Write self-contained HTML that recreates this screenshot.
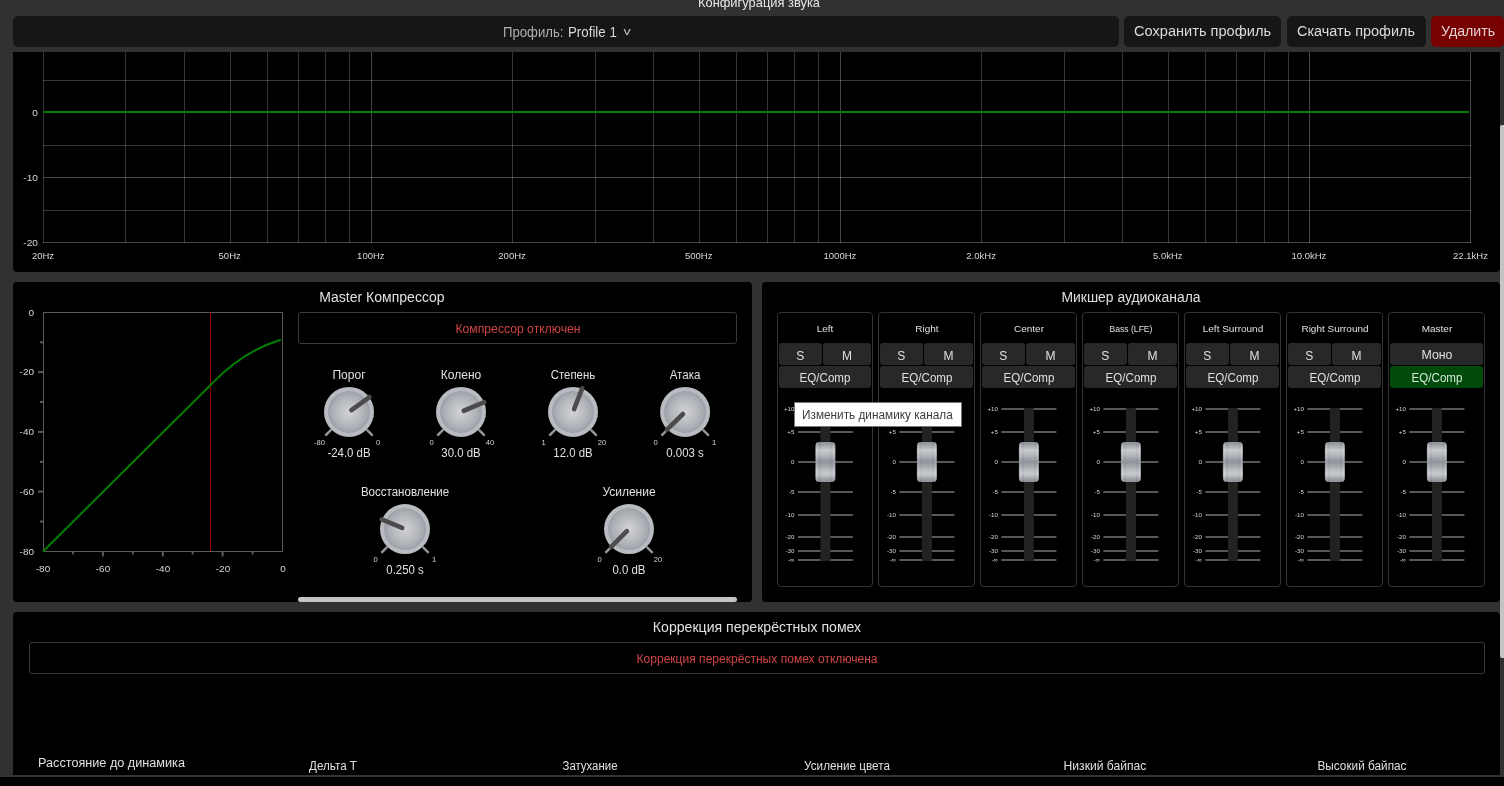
<!DOCTYPE html>
<html lang="ru"><head><meta charset="utf-8"><title>Конфигурация звука</title>
<style>
html,body{margin:0;padding:0;}
body{width:1504px;height:786px;overflow:hidden;position:relative;background:#313131;font-family:"Liberation Sans", sans-serif;}
svg{position:absolute;left:0;top:0;}
</style></head><body>

<div style="position:absolute;left:13px;top:16px;width:1105.75px;height:30.5px;background:#161616;border-radius:5px"></div><div style="position:absolute;left:1124px;top:16px;width:157px;height:31px;background:#161616;border-radius:5px"></div><div style="position:absolute;left:1286.5px;top:16px;width:139.25px;height:31px;background:#161616;border-radius:5px"></div><div style="position:absolute;left:1431px;top:16px;width:73px;height:31px;background:#770000;border-radius:5px"></div><div style="position:absolute;left:13px;top:52px;width:1487px;height:219.75px;background:#000;border-radius:0 0 4px 4px"></div><div style="position:absolute;left:13px;top:282px;width:738.9px;height:320px;background:#000;border-radius:4px"></div><div style="position:absolute;left:298px;top:312px;width:439px;height:32px;box-sizing:border-box;border:1px solid #3a3a3a;border-radius:3px"></div><div style="position:absolute;left:298.4px;top:597px;width:438.5px;height:5px;background:#c4c3c8;border-radius:3px"></div><div style="position:absolute;left:762px;top:282px;width:738px;height:320px;background:#000;border-radius:4px"></div><div style="position:absolute;left:777px;top:312px;width:96px;height:275px;box-sizing:border-box;border:1px solid #333;border-radius:4px"></div><div style="position:absolute;left:779px;top:343px;width:42.5px;height:21.6px;background:#282828;border-radius:3px"></div><div style="position:absolute;left:823px;top:343px;width:48px;height:21.6px;background:#282828;border-radius:3px"></div><div style="position:absolute;left:779px;top:366px;width:92px;height:21.8px;background:#282828;border-radius:3px"></div><div style="position:absolute;left:878px;top:312px;width:97px;height:275px;box-sizing:border-box;border:1px solid #333;border-radius:4px"></div><div style="position:absolute;left:880px;top:343px;width:42.5px;height:21.6px;background:#282828;border-radius:3px"></div><div style="position:absolute;left:924px;top:343px;width:49px;height:21.6px;background:#282828;border-radius:3px"></div><div style="position:absolute;left:880px;top:366px;width:93px;height:21.8px;background:#282828;border-radius:3px"></div><div style="position:absolute;left:980px;top:312px;width:97px;height:275px;box-sizing:border-box;border:1px solid #333;border-radius:4px"></div><div style="position:absolute;left:982px;top:343px;width:42.5px;height:21.6px;background:#282828;border-radius:3px"></div><div style="position:absolute;left:1026px;top:343px;width:49px;height:21.6px;background:#282828;border-radius:3px"></div><div style="position:absolute;left:982px;top:366px;width:93px;height:21.8px;background:#282828;border-radius:3px"></div><div style="position:absolute;left:1082px;top:312px;width:97px;height:275px;box-sizing:border-box;border:1px solid #333;border-radius:4px"></div><div style="position:absolute;left:1084px;top:343px;width:42.5px;height:21.6px;background:#282828;border-radius:3px"></div><div style="position:absolute;left:1128px;top:343px;width:49px;height:21.6px;background:#282828;border-radius:3px"></div><div style="position:absolute;left:1084px;top:366px;width:93px;height:21.8px;background:#282828;border-radius:3px"></div><div style="position:absolute;left:1184px;top:312px;width:97px;height:275px;box-sizing:border-box;border:1px solid #333;border-radius:4px"></div><div style="position:absolute;left:1186px;top:343px;width:42.5px;height:21.6px;background:#282828;border-radius:3px"></div><div style="position:absolute;left:1230px;top:343px;width:49px;height:21.6px;background:#282828;border-radius:3px"></div><div style="position:absolute;left:1186px;top:366px;width:93px;height:21.8px;background:#282828;border-radius:3px"></div><div style="position:absolute;left:1286px;top:312px;width:97px;height:275px;box-sizing:border-box;border:1px solid #333;border-radius:4px"></div><div style="position:absolute;left:1288px;top:343px;width:42.5px;height:21.6px;background:#282828;border-radius:3px"></div><div style="position:absolute;left:1332px;top:343px;width:49px;height:21.6px;background:#282828;border-radius:3px"></div><div style="position:absolute;left:1288px;top:366px;width:93px;height:21.8px;background:#282828;border-radius:3px"></div><div style="position:absolute;left:1388px;top:312px;width:97px;height:275px;box-sizing:border-box;border:1px solid #333;border-radius:4px"></div><div style="position:absolute;left:1390px;top:343px;width:93px;height:21.6px;background:#282828;border-radius:3px"></div><div style="position:absolute;left:1390px;top:366px;width:93px;height:21.8px;background:#004a0a;border-radius:3px"></div><div style="position:absolute;left:13px;top:612px;width:1487px;height:163px;background:#000;border-radius:4px 4px 0 0"></div><div style="position:absolute;left:28.5px;top:642px;width:1456.5px;height:32px;box-sizing:border-box;border:1px solid #3a3a3a;border-radius:3px"></div><div style="position:absolute;left:0px;top:775px;width:1504px;height:2px;background:#333"></div><div style="position:absolute;left:0px;top:777px;width:1504px;height:9px;background:#000"></div><div style="position:absolute;left:1500.2px;top:125px;width:3.8px;height:532.5px;background:#c4c4c8;border-radius:2px 0 0 2px"></div><svg width="1504" height="786" viewBox="0 0 1504 786"><defs>
<radialGradient id="kg" cx="50%" cy="50%" r="50%"><stop offset="0" stop-color="#d3d4d7"/><stop offset="0.75" stop-color="#aeb1b6"/><stop offset="1" stop-color="#9ca0a7"/></radialGradient>
<linearGradient id="hg" x1="0" y1="0" x2="0" y2="1">
<stop offset="0" stop-color="#858a92"/><stop offset="0.08" stop-color="#9a9ea5"/><stop offset="0.2" stop-color="#c4c6c9"/><stop offset="0.32" stop-color="#b2b5ba"/><stop offset="0.5" stop-color="#888d94"/><stop offset="0.68" stop-color="#b2b5ba"/><stop offset="0.8" stop-color="#c4c6c9"/><stop offset="0.92" stop-color="#9a9ea5"/><stop offset="1" stop-color="#858a92"/></linearGradient>
<linearGradient id="hg2" x1="0" y1="0" x2="1" y2="0">
<stop offset="0" stop-color="#000" stop-opacity="0.05"/><stop offset="0.06" stop-color="#fff" stop-opacity="0.28"/><stop offset="0.14" stop-color="#fff" stop-opacity="0"/><stop offset="0.25" stop-color="#000" stop-opacity="0.04"/><stop offset="0.27" stop-color="#fff" stop-opacity="0.06"/><stop offset="0.73" stop-color="#fff" stop-opacity="0.06"/><stop offset="0.75" stop-color="#000" stop-opacity="0.04"/><stop offset="0.86" stop-color="#fff" stop-opacity="0"/><stop offset="0.94" stop-color="#fff" stop-opacity="0.22"/><stop offset="1" stop-color="#000" stop-opacity="0.05"/></linearGradient>
</defs><g stroke="#fff" stroke-width="1"><line x1="43.5" y1="52" x2="43.5" y2="243" stroke-opacity="0.21"/><line x1="125.5" y1="52" x2="125.5" y2="243" stroke-opacity="0.21"/><line x1="184.5" y1="52" x2="184.5" y2="243" stroke-opacity="0.21"/><line x1="230.5" y1="52" x2="230.5" y2="243" stroke-opacity="0.21"/><line x1="267.5" y1="52" x2="267.5" y2="243" stroke-opacity="0.21"/><line x1="298.5" y1="52" x2="298.5" y2="243" stroke-opacity="0.21"/><line x1="325.5" y1="52" x2="325.5" y2="243" stroke-opacity="0.21"/><line x1="349.5" y1="52" x2="349.5" y2="243" stroke-opacity="0.21"/><line x1="371.5" y1="52" x2="371.5" y2="243" stroke-opacity="0.27"/><line x1="512.5" y1="52" x2="512.5" y2="243" stroke-opacity="0.21"/><line x1="595.5" y1="52" x2="595.5" y2="243" stroke-opacity="0.21"/><line x1="653.5" y1="52" x2="653.5" y2="243" stroke-opacity="0.21"/><line x1="699.5" y1="52" x2="699.5" y2="243" stroke-opacity="0.21"/><line x1="736.5" y1="52" x2="736.5" y2="243" stroke-opacity="0.21"/><line x1="767.5" y1="52" x2="767.5" y2="243" stroke-opacity="0.21"/><line x1="794.5" y1="52" x2="794.5" y2="243" stroke-opacity="0.21"/><line x1="818.5" y1="52" x2="818.5" y2="243" stroke-opacity="0.21"/><line x1="840.5" y1="52" x2="840.5" y2="243" stroke-opacity="0.27"/><line x1="981.5" y1="52" x2="981.5" y2="243" stroke-opacity="0.21"/><line x1="1064.5" y1="52" x2="1064.5" y2="243" stroke-opacity="0.21"/><line x1="1122.5" y1="52" x2="1122.5" y2="243" stroke-opacity="0.21"/><line x1="1168.5" y1="52" x2="1168.5" y2="243" stroke-opacity="0.21"/><line x1="1205.5" y1="52" x2="1205.5" y2="243" stroke-opacity="0.21"/><line x1="1236.5" y1="52" x2="1236.5" y2="243" stroke-opacity="0.21"/><line x1="1264.5" y1="52" x2="1264.5" y2="243" stroke-opacity="0.21"/><line x1="1288.5" y1="52" x2="1288.5" y2="243" stroke-opacity="0.21"/><line x1="1309.5" y1="52" x2="1309.5" y2="243" stroke-opacity="0.27"/><line x1="1470.5" y1="52" x2="1470.5" y2="243" stroke-opacity="0.27"/><line x1="43" y1="80.5" x2="1471" y2="80.5" stroke-opacity="0.21"/><line x1="43" y1="145.5" x2="1471" y2="145.5" stroke-opacity="0.21"/><line x1="43" y1="177.5" x2="1471" y2="177.5" stroke-opacity="0.27"/><line x1="43" y1="210.5" x2="1471" y2="210.5" stroke-opacity="0.21"/><line x1="43" y1="242.5" x2="1471" y2="242.5" stroke-opacity="0.27"/></g><line x1="43" y1="112" x2="1469" y2="112" stroke="#008000" stroke-width="2"/><rect x="43.5" y="312.5" width="239" height="239" fill="none" stroke="#5a5a5a" stroke-width="1"/><line x1="40" y1="342.3" x2="43" y2="342.3" stroke="#5a5a5a" stroke-width="2"/><line x1="252.6" y1="551.4" x2="252.6" y2="554.4" stroke="#5a5a5a" stroke-width="2"/><line x1="38" y1="372.1" x2="43" y2="372.1" stroke="#5a5a5a" stroke-width="2"/><line x1="222.6" y1="551.4" x2="222.6" y2="556.4" stroke="#5a5a5a" stroke-width="2"/><line x1="40" y1="402.0" x2="43" y2="402.0" stroke="#5a5a5a" stroke-width="2"/><line x1="192.7" y1="551.4" x2="192.7" y2="554.4" stroke="#5a5a5a" stroke-width="2"/><line x1="38" y1="431.9" x2="43" y2="431.9" stroke="#5a5a5a" stroke-width="2"/><line x1="162.8" y1="551.4" x2="162.8" y2="556.4" stroke="#5a5a5a" stroke-width="2"/><line x1="40" y1="461.8" x2="43" y2="461.8" stroke="#5a5a5a" stroke-width="2"/><line x1="132.8" y1="551.4" x2="132.8" y2="554.4" stroke="#5a5a5a" stroke-width="2"/><line x1="38" y1="491.6" x2="43" y2="491.6" stroke="#5a5a5a" stroke-width="2"/><line x1="102.9" y1="551.4" x2="102.9" y2="556.4" stroke="#5a5a5a" stroke-width="2"/><line x1="40" y1="521.5" x2="43" y2="521.5" stroke="#5a5a5a" stroke-width="2"/><line x1="72.9" y1="551.4" x2="72.9" y2="554.4" stroke="#5a5a5a" stroke-width="2"/><line x1="210.5" y1="312.5" x2="210.5" y2="551" stroke="#8b0000" stroke-width="1.1"/><path d="M43,551.5 L210.6,385 C215.55,380.05 239.6,352.3 280.8,339.8" fill="none" stroke="#008000" stroke-width="2"/><line x1="331.32" y1="429.58" x2="325.31" y2="435.59" stroke="#969696" stroke-width="2.4"/><line x1="366.68" y1="429.58" x2="372.69" y2="435.59" stroke="#969696" stroke-width="2.4"/><circle cx="349" cy="411.9" r="25" fill="#b8bbbf"/><circle cx="349" cy="411.9" r="21" fill="url(#kg)"/><line x1="351.43" y1="410.14" x2="369.47" y2="397.03" stroke="#4c4c4c" stroke-width="4.6" stroke-linecap="round"/><line x1="443.32" y1="429.58" x2="437.31" y2="435.59" stroke="#969696" stroke-width="2.4"/><line x1="478.68" y1="429.58" x2="484.69" y2="435.59" stroke="#969696" stroke-width="2.4"/><circle cx="461" cy="411.9" r="25" fill="#b8bbbf"/><circle cx="461" cy="411.9" r="21" fill="url(#kg)"/><line x1="463.77" y1="410.75" x2="484.37" y2="402.22" stroke="#4c4c4c" stroke-width="4.6" stroke-linecap="round"/><line x1="555.32" y1="429.58" x2="549.31" y2="435.59" stroke="#969696" stroke-width="2.4"/><line x1="590.68" y1="429.58" x2="596.69" y2="435.59" stroke="#969696" stroke-width="2.4"/><circle cx="573" cy="411.9" r="25" fill="#b8bbbf"/><circle cx="573" cy="411.9" r="21" fill="url(#kg)"/><line x1="574.09" y1="409.11" x2="582.20" y2="388.33" stroke="#4c4c4c" stroke-width="4.6" stroke-linecap="round"/><line x1="667.42" y1="429.58" x2="661.41" y2="435.59" stroke="#969696" stroke-width="2.4"/><line x1="702.78" y1="429.58" x2="708.79" y2="435.59" stroke="#969696" stroke-width="2.4"/><circle cx="685.1" cy="411.9" r="25" fill="#b8bbbf"/><circle cx="685.1" cy="411.9" r="21" fill="url(#kg)"/><line x1="682.95" y1="413.99" x2="666.96" y2="429.54" stroke="#4c4c4c" stroke-width="4.6" stroke-linecap="round"/><line x1="387.32" y1="546.78" x2="381.31" y2="552.79" stroke="#969696" stroke-width="2.4"/><line x1="422.68" y1="546.78" x2="428.69" y2="552.79" stroke="#969696" stroke-width="2.4"/><circle cx="405" cy="529.1" r="25" fill="#b8bbbf"/><circle cx="405" cy="529.1" r="21" fill="url(#kg)"/><line x1="402.23" y1="527.95" x2="381.63" y2="519.42" stroke="#4c4c4c" stroke-width="4.6" stroke-linecap="round"/><line x1="611.32" y1="546.78" x2="605.31" y2="552.79" stroke="#969696" stroke-width="2.4"/><line x1="646.68" y1="546.78" x2="652.69" y2="552.79" stroke="#969696" stroke-width="2.4"/><circle cx="629" cy="529.1" r="25" fill="#b8bbbf"/><circle cx="629" cy="529.1" r="21" fill="url(#kg)"/><line x1="626.88" y1="531.22" x2="611.11" y2="546.99" stroke="#4c4c4c" stroke-width="4.6" stroke-linecap="round"/><line x1="797.9" y1="409" x2="852.9" y2="409" stroke="#585858" stroke-width="2"/><line x1="797.9" y1="432" x2="852.9" y2="432" stroke="#585858" stroke-width="2"/><line x1="797.9" y1="462" x2="852.9" y2="462" stroke="#585858" stroke-width="2"/><line x1="797.9" y1="492" x2="852.9" y2="492" stroke="#585858" stroke-width="2"/><line x1="797.9" y1="515" x2="852.9" y2="515" stroke="#585858" stroke-width="2"/><line x1="797.9" y1="537" x2="852.9" y2="537" stroke="#585858" stroke-width="2"/><line x1="797.9" y1="551" x2="852.9" y2="551" stroke="#585858" stroke-width="2"/><line x1="797.9" y1="560" x2="852.9" y2="560" stroke="#585858" stroke-width="2"/><rect x="820.4" y="408" width="10" height="153" rx="1" fill="#222"/><rect x="815.4" y="442" width="20" height="40" rx="4" fill="url(#hg)"/><rect x="815.4" y="442" width="20" height="40" rx="4" fill="url(#hg2)"/><line x1="815.4" y1="462" x2="820.4" y2="462" stroke="#9aa0a8" stroke-opacity="0.35" stroke-width="2"/><line x1="830.4" y1="462" x2="835.4" y2="462" stroke="#9aa0a8" stroke-opacity="0.35" stroke-width="2"/><line x1="899.4" y1="409" x2="954.4" y2="409" stroke="#585858" stroke-width="2"/><line x1="899.4" y1="432" x2="954.4" y2="432" stroke="#585858" stroke-width="2"/><line x1="899.4" y1="462" x2="954.4" y2="462" stroke="#585858" stroke-width="2"/><line x1="899.4" y1="492" x2="954.4" y2="492" stroke="#585858" stroke-width="2"/><line x1="899.4" y1="515" x2="954.4" y2="515" stroke="#585858" stroke-width="2"/><line x1="899.4" y1="537" x2="954.4" y2="537" stroke="#585858" stroke-width="2"/><line x1="899.4" y1="551" x2="954.4" y2="551" stroke="#585858" stroke-width="2"/><line x1="899.4" y1="560" x2="954.4" y2="560" stroke="#585858" stroke-width="2"/><rect x="921.9" y="408" width="10" height="153" rx="1" fill="#222"/><rect x="916.9" y="442" width="20" height="40" rx="4" fill="url(#hg)"/><rect x="916.9" y="442" width="20" height="40" rx="4" fill="url(#hg2)"/><line x1="916.9" y1="462" x2="921.9" y2="462" stroke="#9aa0a8" stroke-opacity="0.35" stroke-width="2"/><line x1="931.9" y1="462" x2="936.9" y2="462" stroke="#9aa0a8" stroke-opacity="0.35" stroke-width="2"/><line x1="1001.4000000000001" y1="409" x2="1056.4" y2="409" stroke="#585858" stroke-width="2"/><line x1="1001.4000000000001" y1="432" x2="1056.4" y2="432" stroke="#585858" stroke-width="2"/><line x1="1001.4000000000001" y1="462" x2="1056.4" y2="462" stroke="#585858" stroke-width="2"/><line x1="1001.4000000000001" y1="492" x2="1056.4" y2="492" stroke="#585858" stroke-width="2"/><line x1="1001.4000000000001" y1="515" x2="1056.4" y2="515" stroke="#585858" stroke-width="2"/><line x1="1001.4000000000001" y1="537" x2="1056.4" y2="537" stroke="#585858" stroke-width="2"/><line x1="1001.4000000000001" y1="551" x2="1056.4" y2="551" stroke="#585858" stroke-width="2"/><line x1="1001.4000000000001" y1="560" x2="1056.4" y2="560" stroke="#585858" stroke-width="2"/><rect x="1023.9000000000001" y="408" width="10" height="153" rx="1" fill="#222"/><rect x="1018.9000000000001" y="442" width="20" height="40" rx="4" fill="url(#hg)"/><rect x="1018.9000000000001" y="442" width="20" height="40" rx="4" fill="url(#hg2)"/><line x1="1018.9000000000001" y1="462" x2="1023.9000000000001" y2="462" stroke="#9aa0a8" stroke-opacity="0.35" stroke-width="2"/><line x1="1033.9" y1="462" x2="1038.9" y2="462" stroke="#9aa0a8" stroke-opacity="0.35" stroke-width="2"/><line x1="1103.4" y1="409" x2="1158.4" y2="409" stroke="#585858" stroke-width="2"/><line x1="1103.4" y1="432" x2="1158.4" y2="432" stroke="#585858" stroke-width="2"/><line x1="1103.4" y1="462" x2="1158.4" y2="462" stroke="#585858" stroke-width="2"/><line x1="1103.4" y1="492" x2="1158.4" y2="492" stroke="#585858" stroke-width="2"/><line x1="1103.4" y1="515" x2="1158.4" y2="515" stroke="#585858" stroke-width="2"/><line x1="1103.4" y1="537" x2="1158.4" y2="537" stroke="#585858" stroke-width="2"/><line x1="1103.4" y1="551" x2="1158.4" y2="551" stroke="#585858" stroke-width="2"/><line x1="1103.4" y1="560" x2="1158.4" y2="560" stroke="#585858" stroke-width="2"/><rect x="1125.9" y="408" width="10" height="153" rx="1" fill="#222"/><rect x="1120.9" y="442" width="20" height="40" rx="4" fill="url(#hg)"/><rect x="1120.9" y="442" width="20" height="40" rx="4" fill="url(#hg2)"/><line x1="1120.9" y1="462" x2="1125.9" y2="462" stroke="#9aa0a8" stroke-opacity="0.35" stroke-width="2"/><line x1="1135.9" y1="462" x2="1140.9" y2="462" stroke="#9aa0a8" stroke-opacity="0.35" stroke-width="2"/><line x1="1205.4" y1="409" x2="1260.4" y2="409" stroke="#585858" stroke-width="2"/><line x1="1205.4" y1="432" x2="1260.4" y2="432" stroke="#585858" stroke-width="2"/><line x1="1205.4" y1="462" x2="1260.4" y2="462" stroke="#585858" stroke-width="2"/><line x1="1205.4" y1="492" x2="1260.4" y2="492" stroke="#585858" stroke-width="2"/><line x1="1205.4" y1="515" x2="1260.4" y2="515" stroke="#585858" stroke-width="2"/><line x1="1205.4" y1="537" x2="1260.4" y2="537" stroke="#585858" stroke-width="2"/><line x1="1205.4" y1="551" x2="1260.4" y2="551" stroke="#585858" stroke-width="2"/><line x1="1205.4" y1="560" x2="1260.4" y2="560" stroke="#585858" stroke-width="2"/><rect x="1227.9" y="408" width="10" height="153" rx="1" fill="#222"/><rect x="1222.9" y="442" width="20" height="40" rx="4" fill="url(#hg)"/><rect x="1222.9" y="442" width="20" height="40" rx="4" fill="url(#hg2)"/><line x1="1222.9" y1="462" x2="1227.9" y2="462" stroke="#9aa0a8" stroke-opacity="0.35" stroke-width="2"/><line x1="1237.9" y1="462" x2="1242.9" y2="462" stroke="#9aa0a8" stroke-opacity="0.35" stroke-width="2"/><line x1="1307.4" y1="409" x2="1362.4" y2="409" stroke="#585858" stroke-width="2"/><line x1="1307.4" y1="432" x2="1362.4" y2="432" stroke="#585858" stroke-width="2"/><line x1="1307.4" y1="462" x2="1362.4" y2="462" stroke="#585858" stroke-width="2"/><line x1="1307.4" y1="492" x2="1362.4" y2="492" stroke="#585858" stroke-width="2"/><line x1="1307.4" y1="515" x2="1362.4" y2="515" stroke="#585858" stroke-width="2"/><line x1="1307.4" y1="537" x2="1362.4" y2="537" stroke="#585858" stroke-width="2"/><line x1="1307.4" y1="551" x2="1362.4" y2="551" stroke="#585858" stroke-width="2"/><line x1="1307.4" y1="560" x2="1362.4" y2="560" stroke="#585858" stroke-width="2"/><rect x="1329.9" y="408" width="10" height="153" rx="1" fill="#222"/><rect x="1324.9" y="442" width="20" height="40" rx="4" fill="url(#hg)"/><rect x="1324.9" y="442" width="20" height="40" rx="4" fill="url(#hg2)"/><line x1="1324.9" y1="462" x2="1329.9" y2="462" stroke="#9aa0a8" stroke-opacity="0.35" stroke-width="2"/><line x1="1339.9" y1="462" x2="1344.9" y2="462" stroke="#9aa0a8" stroke-opacity="0.35" stroke-width="2"/><line x1="1409.4" y1="409" x2="1464.4" y2="409" stroke="#585858" stroke-width="2"/><line x1="1409.4" y1="432" x2="1464.4" y2="432" stroke="#585858" stroke-width="2"/><line x1="1409.4" y1="462" x2="1464.4" y2="462" stroke="#585858" stroke-width="2"/><line x1="1409.4" y1="492" x2="1464.4" y2="492" stroke="#585858" stroke-width="2"/><line x1="1409.4" y1="515" x2="1464.4" y2="515" stroke="#585858" stroke-width="2"/><line x1="1409.4" y1="537" x2="1464.4" y2="537" stroke="#585858" stroke-width="2"/><line x1="1409.4" y1="551" x2="1464.4" y2="551" stroke="#585858" stroke-width="2"/><line x1="1409.4" y1="560" x2="1464.4" y2="560" stroke="#585858" stroke-width="2"/><rect x="1431.9" y="408" width="10" height="153" rx="1" fill="#222"/><rect x="1426.9" y="442" width="20" height="40" rx="4" fill="url(#hg)"/><rect x="1426.9" y="442" width="20" height="40" rx="4" fill="url(#hg2)"/><line x1="1426.9" y1="462" x2="1431.9" y2="462" stroke="#9aa0a8" stroke-opacity="0.35" stroke-width="2"/><line x1="1441.9" y1="462" x2="1446.9" y2="462" stroke="#9aa0a8" stroke-opacity="0.35" stroke-width="2"/></svg><div style="position:absolute;left:0;top:0;width:1504px;height:786px;will-change:transform"><span style="position:absolute;left:759.00px;top:-4.47px;font-size:13.5px;line-height:13.5px;color:#e6e6e6;white-space:nowrap;transform-origin:0 0;transform:scaleX(0.9541) translateX(-50%);">Конфигурация звука</span><span style="position:absolute;left:502.70px;top:25.87px;font-size:13.8px;line-height:13.8px;color:#b0b0b0;white-space:nowrap;transform-origin:0 0;transform:scaleX(0.9526);">Профиль:</span><span style="position:absolute;left:567.80px;top:25.87px;font-size:13.8px;line-height:13.8px;color:#d8d8d8;white-space:nowrap;transform-origin:0 0;transform:scaleX(0.9640);">Profile 1</span><span style="position:absolute;left:626.80px;top:26.02px;font-size:11.5px;line-height:11.5px;color:#c8c8c8;white-space:nowrap;transform-origin:0 0;transform:scaleX(1.2522) translateX(-50%);">v</span><span style="position:absolute;left:1134.40px;top:23.03px;font-size:15.5px;line-height:15.5px;color:#dcdcdc;white-space:nowrap;transform-origin:0 0;transform:scaleX(0.9416);">Сохранить профиль</span><span style="position:absolute;left:1296.60px;top:23.03px;font-size:15.5px;line-height:15.5px;color:#dcdcdc;white-space:nowrap;transform-origin:0 0;transform:scaleX(0.9320);">Скачать профиль</span><span style="position:absolute;left:1441.00px;top:23.03px;font-size:15.5px;line-height:15.5px;color:#e2d0d0;white-space:nowrap;transform-origin:0 0;transform:scaleX(0.9124);">Удалить</span><span style="position:absolute;left:38.00px;top:107.92px;font-size:9.5px;line-height:9.5px;color:#d8d8d8;white-space:nowrap;transform-origin:0 0;transform:scaleX(1.0700) translateX(-100%);">0</span><span style="position:absolute;left:38.00px;top:172.93px;font-size:9.5px;line-height:9.5px;color:#d8d8d8;white-space:nowrap;transform-origin:0 0;transform:scaleX(1.0700) translateX(-100%);">-10</span><span style="position:absolute;left:38.00px;top:237.93px;font-size:9.5px;line-height:9.5px;color:#d8d8d8;white-space:nowrap;transform-origin:0 0;transform:scaleX(1.0700) translateX(-100%);">-20</span><span style="position:absolute;left:43.00px;top:250.93px;font-size:9.5px;line-height:9.5px;color:#d8d8d8;white-space:nowrap;transform-origin:0 0;transform:scaleX(1.0000) translateX(-50%);">20Hz</span><span style="position:absolute;left:229.66px;top:250.93px;font-size:9.5px;line-height:9.5px;color:#d8d8d8;white-space:nowrap;transform-origin:0 0;transform:scaleX(1.0000) translateX(-50%);">50Hz</span><span style="position:absolute;left:370.85px;top:250.93px;font-size:9.5px;line-height:9.5px;color:#d8d8d8;white-space:nowrap;transform-origin:0 0;transform:scaleX(1.0000) translateX(-50%);">100Hz</span><span style="position:absolute;left:512.05px;top:250.93px;font-size:9.5px;line-height:9.5px;color:#d8d8d8;white-space:nowrap;transform-origin:0 0;transform:scaleX(1.0000) translateX(-50%);">200Hz</span><span style="position:absolute;left:698.71px;top:250.93px;font-size:9.5px;line-height:9.5px;color:#d8d8d8;white-space:nowrap;transform-origin:0 0;transform:scaleX(1.0000) translateX(-50%);">500Hz</span><span style="position:absolute;left:839.91px;top:250.93px;font-size:9.5px;line-height:9.5px;color:#d8d8d8;white-space:nowrap;transform-origin:0 0;transform:scaleX(1.0000) translateX(-50%);">1000Hz</span><span style="position:absolute;left:981.11px;top:250.93px;font-size:9.5px;line-height:9.5px;color:#d8d8d8;white-space:nowrap;transform-origin:0 0;transform:scaleX(1.0000) translateX(-50%);">2.0kHz</span><span style="position:absolute;left:1167.76px;top:250.93px;font-size:9.5px;line-height:9.5px;color:#d8d8d8;white-space:nowrap;transform-origin:0 0;transform:scaleX(1.0000) translateX(-50%);">5.0kHz</span><span style="position:absolute;left:1308.96px;top:250.93px;font-size:9.5px;line-height:9.5px;color:#d8d8d8;white-space:nowrap;transform-origin:0 0;transform:scaleX(1.0000) translateX(-50%);">10.0kHz</span><span style="position:absolute;left:1470.50px;top:250.93px;font-size:9.5px;line-height:9.5px;color:#d8d8d8;white-space:nowrap;transform-origin:0 0;transform:scaleX(1.0000) translateX(-50%);">22.1kHz</span><span style="position:absolute;left:34.00px;top:308.69px;font-size:9.3px;line-height:9.3px;color:#d8d8d8;white-space:nowrap;transform-origin:0 0;transform:scaleX(1.0700) translateX(-100%);">0</span><span style="position:absolute;left:282.50px;top:564.60px;font-size:9.3px;line-height:9.3px;color:#d8d8d8;white-space:nowrap;transform-origin:0 0;transform:scaleX(1.0700) translateX(-50%);">0</span><span style="position:absolute;left:34.00px;top:368.44px;font-size:9.3px;line-height:9.3px;color:#d8d8d8;white-space:nowrap;transform-origin:0 0;transform:scaleX(1.0700) translateX(-100%);">-20</span><span style="position:absolute;left:222.62px;top:564.60px;font-size:9.3px;line-height:9.3px;color:#d8d8d8;white-space:nowrap;transform-origin:0 0;transform:scaleX(1.0700) translateX(-50%);">-20</span><span style="position:absolute;left:34.00px;top:428.19px;font-size:9.3px;line-height:9.3px;color:#d8d8d8;white-space:nowrap;transform-origin:0 0;transform:scaleX(1.0700) translateX(-100%);">-40</span><span style="position:absolute;left:162.75px;top:564.60px;font-size:9.3px;line-height:9.3px;color:#d8d8d8;white-space:nowrap;transform-origin:0 0;transform:scaleX(1.0700) translateX(-50%);">-40</span><span style="position:absolute;left:34.00px;top:487.94px;font-size:9.3px;line-height:9.3px;color:#d8d8d8;white-space:nowrap;transform-origin:0 0;transform:scaleX(1.0700) translateX(-100%);">-60</span><span style="position:absolute;left:102.88px;top:564.60px;font-size:9.3px;line-height:9.3px;color:#d8d8d8;white-space:nowrap;transform-origin:0 0;transform:scaleX(1.0700) translateX(-50%);">-60</span><span style="position:absolute;left:34.00px;top:547.70px;font-size:9.3px;line-height:9.3px;color:#d8d8d8;white-space:nowrap;transform-origin:0 0;transform:scaleX(1.0700) translateX(-100%);">-80</span><span style="position:absolute;left:43.00px;top:564.60px;font-size:9.3px;line-height:9.3px;color:#d8d8d8;white-space:nowrap;transform-origin:0 0;transform:scaleX(1.0700) translateX(-50%);">-80</span><span style="position:absolute;left:382.40px;top:290.40px;font-size:14px;line-height:14px;color:#e0e0e0;white-space:nowrap;transform-origin:0 0;transform:scaleX(1.0014) translateX(-50%);">Master Компрессор</span><span style="position:absolute;left:517.50px;top:322.80px;font-size:12px;line-height:12px;color:#d04545;white-space:nowrap;transform-origin:0 0;transform:scaleX(1.0148) translateX(-50%);">Компрессор отключен</span><span style="position:absolute;left:349.00px;top:368.70px;font-size:12px;line-height:12px;color:#e0e0e0;white-space:nowrap;transform-origin:0 0;transform:scaleX(1.0000) translateX(-50%);">Порог</span><span style="position:absolute;left:319.50px;top:439.24px;font-size:7.6px;line-height:7.6px;color:#d8d8d8;white-space:nowrap;transform-origin:0 0;transform:scaleX(1.0000) translateX(-50%);">-80</span><span style="position:absolute;left:378.00px;top:439.24px;font-size:7.6px;line-height:7.6px;color:#d8d8d8;white-space:nowrap;transform-origin:0 0;transform:scaleX(1.0000) translateX(-50%);">0</span><span style="position:absolute;left:349.00px;top:446.70px;font-size:12px;line-height:12px;color:#e0e0e0;white-space:nowrap;transform-origin:0 0;transform:scaleX(0.9500) translateX(-50%);">-24.0 dB</span><span style="position:absolute;left:461.00px;top:368.70px;font-size:12px;line-height:12px;color:#e0e0e0;white-space:nowrap;transform-origin:0 0;transform:scaleX(1.0000) translateX(-50%);">Колено</span><span style="position:absolute;left:431.50px;top:439.24px;font-size:7.6px;line-height:7.6px;color:#d8d8d8;white-space:nowrap;transform-origin:0 0;transform:scaleX(1.0000) translateX(-50%);">0</span><span style="position:absolute;left:490.00px;top:439.24px;font-size:7.6px;line-height:7.6px;color:#d8d8d8;white-space:nowrap;transform-origin:0 0;transform:scaleX(1.0000) translateX(-50%);">40</span><span style="position:absolute;left:461.00px;top:446.70px;font-size:12px;line-height:12px;color:#e0e0e0;white-space:nowrap;transform-origin:0 0;transform:scaleX(0.9500) translateX(-50%);">30.0 dB</span><span style="position:absolute;left:573.00px;top:368.70px;font-size:12px;line-height:12px;color:#e0e0e0;white-space:nowrap;transform-origin:0 0;transform:scaleX(0.9494) translateX(-50%);">Степень</span><span style="position:absolute;left:543.50px;top:439.24px;font-size:7.6px;line-height:7.6px;color:#d8d8d8;white-space:nowrap;transform-origin:0 0;transform:scaleX(1.0000) translateX(-50%);">1</span><span style="position:absolute;left:602.00px;top:439.24px;font-size:7.6px;line-height:7.6px;color:#d8d8d8;white-space:nowrap;transform-origin:0 0;transform:scaleX(1.0000) translateX(-50%);">20</span><span style="position:absolute;left:573.00px;top:446.70px;font-size:12px;line-height:12px;color:#e0e0e0;white-space:nowrap;transform-origin:0 0;transform:scaleX(0.9500) translateX(-50%);">12.0 dB</span><span style="position:absolute;left:685.10px;top:368.70px;font-size:12px;line-height:12px;color:#e0e0e0;white-space:nowrap;transform-origin:0 0;transform:scaleX(0.9603) translateX(-50%);">Атака</span><span style="position:absolute;left:655.60px;top:439.24px;font-size:7.6px;line-height:7.6px;color:#d8d8d8;white-space:nowrap;transform-origin:0 0;transform:scaleX(1.0000) translateX(-50%);">0</span><span style="position:absolute;left:714.10px;top:439.24px;font-size:7.6px;line-height:7.6px;color:#d8d8d8;white-space:nowrap;transform-origin:0 0;transform:scaleX(1.0000) translateX(-50%);">1</span><span style="position:absolute;left:685.10px;top:446.70px;font-size:12px;line-height:12px;color:#e0e0e0;white-space:nowrap;transform-origin:0 0;transform:scaleX(0.9500) translateX(-50%);">0.003 s</span><span style="position:absolute;left:405.00px;top:485.90px;font-size:12px;line-height:12px;color:#e0e0e0;white-space:nowrap;transform-origin:0 0;transform:scaleX(0.9608) translateX(-50%);">Восстановление</span><span style="position:absolute;left:375.50px;top:556.44px;font-size:7.6px;line-height:7.6px;color:#d8d8d8;white-space:nowrap;transform-origin:0 0;transform:scaleX(1.0000) translateX(-50%);">0</span><span style="position:absolute;left:434.00px;top:556.44px;font-size:7.6px;line-height:7.6px;color:#d8d8d8;white-space:nowrap;transform-origin:0 0;transform:scaleX(1.0000) translateX(-50%);">1</span><span style="position:absolute;left:405.00px;top:563.90px;font-size:12px;line-height:12px;color:#e0e0e0;white-space:nowrap;transform-origin:0 0;transform:scaleX(0.9500) translateX(-50%);">0.250 s</span><span style="position:absolute;left:629.00px;top:485.90px;font-size:12px;line-height:12px;color:#e0e0e0;white-space:nowrap;transform-origin:0 0;transform:scaleX(1.0000) translateX(-50%);">Усиление</span><span style="position:absolute;left:599.50px;top:556.44px;font-size:7.6px;line-height:7.6px;color:#d8d8d8;white-space:nowrap;transform-origin:0 0;transform:scaleX(1.0000) translateX(-50%);">0</span><span style="position:absolute;left:658.00px;top:556.44px;font-size:7.6px;line-height:7.6px;color:#d8d8d8;white-space:nowrap;transform-origin:0 0;transform:scaleX(1.0000) translateX(-50%);">20</span><span style="position:absolute;left:629.00px;top:563.90px;font-size:12px;line-height:12px;color:#e0e0e0;white-space:nowrap;transform-origin:0 0;transform:scaleX(0.9500) translateX(-50%);">0.0 dB</span><span style="position:absolute;left:1131.00px;top:290.00px;font-size:14px;line-height:14px;color:#e0e0e0;white-space:nowrap;transform-origin:0 0;transform:scaleX(0.9933) translateX(-50%);">Микшер аудиоканала</span><span style="position:absolute;left:825.00px;top:324.03px;font-size:9.5px;line-height:9.5px;color:#e0e0e0;white-space:nowrap;transform-origin:0 0;transform:scaleX(1.0500) translateX(-50%);">Left</span><span style="position:absolute;left:800.20px;top:349.50px;font-size:12px;line-height:12px;color:#e0e0e0;white-space:nowrap;transform-origin:0 0;transform:scaleX(1.0000) translateX(-50%);">S</span><span style="position:absolute;left:847.00px;top:349.50px;font-size:12px;line-height:12px;color:#e0e0e0;white-space:nowrap;transform-origin:0 0;transform:scaleX(1.0000) translateX(-50%);">M</span><span style="position:absolute;left:825.00px;top:371.88px;font-size:12.5px;line-height:12.5px;color:#e0e0e0;white-space:nowrap;transform-origin:0 0;transform:scaleX(0.9255) translateX(-50%);">EQ/Comp</span><span style="position:absolute;left:794.40px;top:406.03px;font-size:6.2px;line-height:6.2px;color:#d8d8d8;white-space:nowrap;transform-origin:0 0;transform:scaleX(1.0000) translateX(-100%);">+10</span><span style="position:absolute;left:794.40px;top:429.03px;font-size:6.2px;line-height:6.2px;color:#d8d8d8;white-space:nowrap;transform-origin:0 0;transform:scaleX(1.0000) translateX(-100%);">+5</span><span style="position:absolute;left:794.40px;top:459.03px;font-size:6.2px;line-height:6.2px;color:#d8d8d8;white-space:nowrap;transform-origin:0 0;transform:scaleX(1.0000) translateX(-100%);">0</span><span style="position:absolute;left:794.40px;top:489.03px;font-size:6.2px;line-height:6.2px;color:#d8d8d8;white-space:nowrap;transform-origin:0 0;transform:scaleX(1.0000) translateX(-100%);">-5</span><span style="position:absolute;left:794.40px;top:512.03px;font-size:6.2px;line-height:6.2px;color:#d8d8d8;white-space:nowrap;transform-origin:0 0;transform:scaleX(1.0000) translateX(-100%);">-10</span><span style="position:absolute;left:794.40px;top:534.03px;font-size:6.2px;line-height:6.2px;color:#d8d8d8;white-space:nowrap;transform-origin:0 0;transform:scaleX(1.0000) translateX(-100%);">-20</span><span style="position:absolute;left:794.40px;top:548.03px;font-size:6.2px;line-height:6.2px;color:#d8d8d8;white-space:nowrap;transform-origin:0 0;transform:scaleX(1.0000) translateX(-100%);">-30</span><span style="position:absolute;left:794.40px;top:557.03px;font-size:6.2px;line-height:6.2px;color:#d8d8d8;white-space:nowrap;transform-origin:0 0;transform:scaleX(1.0000) translateX(-100%);">-∞</span><span style="position:absolute;left:926.50px;top:324.03px;font-size:9.5px;line-height:9.5px;color:#e0e0e0;white-space:nowrap;transform-origin:0 0;transform:scaleX(1.0500) translateX(-50%);">Right</span><span style="position:absolute;left:901.20px;top:349.50px;font-size:12px;line-height:12px;color:#e0e0e0;white-space:nowrap;transform-origin:0 0;transform:scaleX(1.0000) translateX(-50%);">S</span><span style="position:absolute;left:948.50px;top:349.50px;font-size:12px;line-height:12px;color:#e0e0e0;white-space:nowrap;transform-origin:0 0;transform:scaleX(1.0000) translateX(-50%);">M</span><span style="position:absolute;left:926.50px;top:371.88px;font-size:12.5px;line-height:12.5px;color:#e0e0e0;white-space:nowrap;transform-origin:0 0;transform:scaleX(0.9255) translateX(-50%);">EQ/Comp</span><span style="position:absolute;left:895.90px;top:406.03px;font-size:6.2px;line-height:6.2px;color:#d8d8d8;white-space:nowrap;transform-origin:0 0;transform:scaleX(1.0000) translateX(-100%);">+10</span><span style="position:absolute;left:895.90px;top:429.03px;font-size:6.2px;line-height:6.2px;color:#d8d8d8;white-space:nowrap;transform-origin:0 0;transform:scaleX(1.0000) translateX(-100%);">+5</span><span style="position:absolute;left:895.90px;top:459.03px;font-size:6.2px;line-height:6.2px;color:#d8d8d8;white-space:nowrap;transform-origin:0 0;transform:scaleX(1.0000) translateX(-100%);">0</span><span style="position:absolute;left:895.90px;top:489.03px;font-size:6.2px;line-height:6.2px;color:#d8d8d8;white-space:nowrap;transform-origin:0 0;transform:scaleX(1.0000) translateX(-100%);">-5</span><span style="position:absolute;left:895.90px;top:512.03px;font-size:6.2px;line-height:6.2px;color:#d8d8d8;white-space:nowrap;transform-origin:0 0;transform:scaleX(1.0000) translateX(-100%);">-10</span><span style="position:absolute;left:895.90px;top:534.03px;font-size:6.2px;line-height:6.2px;color:#d8d8d8;white-space:nowrap;transform-origin:0 0;transform:scaleX(1.0000) translateX(-100%);">-20</span><span style="position:absolute;left:895.90px;top:548.03px;font-size:6.2px;line-height:6.2px;color:#d8d8d8;white-space:nowrap;transform-origin:0 0;transform:scaleX(1.0000) translateX(-100%);">-30</span><span style="position:absolute;left:895.90px;top:557.03px;font-size:6.2px;line-height:6.2px;color:#d8d8d8;white-space:nowrap;transform-origin:0 0;transform:scaleX(1.0000) translateX(-100%);">-∞</span><span style="position:absolute;left:1028.50px;top:324.03px;font-size:9.5px;line-height:9.5px;color:#e0e0e0;white-space:nowrap;transform-origin:0 0;transform:scaleX(1.0500) translateX(-50%);">Center</span><span style="position:absolute;left:1003.20px;top:349.50px;font-size:12px;line-height:12px;color:#e0e0e0;white-space:nowrap;transform-origin:0 0;transform:scaleX(1.0000) translateX(-50%);">S</span><span style="position:absolute;left:1050.50px;top:349.50px;font-size:12px;line-height:12px;color:#e0e0e0;white-space:nowrap;transform-origin:0 0;transform:scaleX(1.0000) translateX(-50%);">M</span><span style="position:absolute;left:1028.50px;top:371.88px;font-size:12.5px;line-height:12.5px;color:#e0e0e0;white-space:nowrap;transform-origin:0 0;transform:scaleX(0.9255) translateX(-50%);">EQ/Comp</span><span style="position:absolute;left:997.90px;top:406.03px;font-size:6.2px;line-height:6.2px;color:#d8d8d8;white-space:nowrap;transform-origin:0 0;transform:scaleX(1.0000) translateX(-100%);">+10</span><span style="position:absolute;left:997.90px;top:429.03px;font-size:6.2px;line-height:6.2px;color:#d8d8d8;white-space:nowrap;transform-origin:0 0;transform:scaleX(1.0000) translateX(-100%);">+5</span><span style="position:absolute;left:997.90px;top:459.03px;font-size:6.2px;line-height:6.2px;color:#d8d8d8;white-space:nowrap;transform-origin:0 0;transform:scaleX(1.0000) translateX(-100%);">0</span><span style="position:absolute;left:997.90px;top:489.03px;font-size:6.2px;line-height:6.2px;color:#d8d8d8;white-space:nowrap;transform-origin:0 0;transform:scaleX(1.0000) translateX(-100%);">-5</span><span style="position:absolute;left:997.90px;top:512.03px;font-size:6.2px;line-height:6.2px;color:#d8d8d8;white-space:nowrap;transform-origin:0 0;transform:scaleX(1.0000) translateX(-100%);">-10</span><span style="position:absolute;left:997.90px;top:534.03px;font-size:6.2px;line-height:6.2px;color:#d8d8d8;white-space:nowrap;transform-origin:0 0;transform:scaleX(1.0000) translateX(-100%);">-20</span><span style="position:absolute;left:997.90px;top:548.03px;font-size:6.2px;line-height:6.2px;color:#d8d8d8;white-space:nowrap;transform-origin:0 0;transform:scaleX(1.0000) translateX(-100%);">-30</span><span style="position:absolute;left:997.90px;top:557.03px;font-size:6.2px;line-height:6.2px;color:#d8d8d8;white-space:nowrap;transform-origin:0 0;transform:scaleX(1.0000) translateX(-100%);">-∞</span><span style="position:absolute;left:1130.50px;top:324.03px;font-size:9.5px;line-height:9.5px;color:#e0e0e0;white-space:nowrap;transform-origin:0 0;transform:scaleX(0.9029) translateX(-50%);">Bass (LFE)</span><span style="position:absolute;left:1105.20px;top:349.50px;font-size:12px;line-height:12px;color:#e0e0e0;white-space:nowrap;transform-origin:0 0;transform:scaleX(1.0000) translateX(-50%);">S</span><span style="position:absolute;left:1152.50px;top:349.50px;font-size:12px;line-height:12px;color:#e0e0e0;white-space:nowrap;transform-origin:0 0;transform:scaleX(1.0000) translateX(-50%);">M</span><span style="position:absolute;left:1130.50px;top:371.88px;font-size:12.5px;line-height:12.5px;color:#e0e0e0;white-space:nowrap;transform-origin:0 0;transform:scaleX(0.9255) translateX(-50%);">EQ/Comp</span><span style="position:absolute;left:1099.90px;top:406.03px;font-size:6.2px;line-height:6.2px;color:#d8d8d8;white-space:nowrap;transform-origin:0 0;transform:scaleX(1.0000) translateX(-100%);">+10</span><span style="position:absolute;left:1099.90px;top:429.03px;font-size:6.2px;line-height:6.2px;color:#d8d8d8;white-space:nowrap;transform-origin:0 0;transform:scaleX(1.0000) translateX(-100%);">+5</span><span style="position:absolute;left:1099.90px;top:459.03px;font-size:6.2px;line-height:6.2px;color:#d8d8d8;white-space:nowrap;transform-origin:0 0;transform:scaleX(1.0000) translateX(-100%);">0</span><span style="position:absolute;left:1099.90px;top:489.03px;font-size:6.2px;line-height:6.2px;color:#d8d8d8;white-space:nowrap;transform-origin:0 0;transform:scaleX(1.0000) translateX(-100%);">-5</span><span style="position:absolute;left:1099.90px;top:512.03px;font-size:6.2px;line-height:6.2px;color:#d8d8d8;white-space:nowrap;transform-origin:0 0;transform:scaleX(1.0000) translateX(-100%);">-10</span><span style="position:absolute;left:1099.90px;top:534.03px;font-size:6.2px;line-height:6.2px;color:#d8d8d8;white-space:nowrap;transform-origin:0 0;transform:scaleX(1.0000) translateX(-100%);">-20</span><span style="position:absolute;left:1099.90px;top:548.03px;font-size:6.2px;line-height:6.2px;color:#d8d8d8;white-space:nowrap;transform-origin:0 0;transform:scaleX(1.0000) translateX(-100%);">-30</span><span style="position:absolute;left:1099.90px;top:557.03px;font-size:6.2px;line-height:6.2px;color:#d8d8d8;white-space:nowrap;transform-origin:0 0;transform:scaleX(1.0000) translateX(-100%);">-∞</span><span style="position:absolute;left:1232.50px;top:324.03px;font-size:9.5px;line-height:9.5px;color:#e0e0e0;white-space:nowrap;transform-origin:0 0;transform:scaleX(1.0500) translateX(-50%);">Left Surround</span><span style="position:absolute;left:1207.20px;top:349.50px;font-size:12px;line-height:12px;color:#e0e0e0;white-space:nowrap;transform-origin:0 0;transform:scaleX(1.0000) translateX(-50%);">S</span><span style="position:absolute;left:1254.50px;top:349.50px;font-size:12px;line-height:12px;color:#e0e0e0;white-space:nowrap;transform-origin:0 0;transform:scaleX(1.0000) translateX(-50%);">M</span><span style="position:absolute;left:1232.50px;top:371.88px;font-size:12.5px;line-height:12.5px;color:#e0e0e0;white-space:nowrap;transform-origin:0 0;transform:scaleX(0.9255) translateX(-50%);">EQ/Comp</span><span style="position:absolute;left:1201.90px;top:406.03px;font-size:6.2px;line-height:6.2px;color:#d8d8d8;white-space:nowrap;transform-origin:0 0;transform:scaleX(1.0000) translateX(-100%);">+10</span><span style="position:absolute;left:1201.90px;top:429.03px;font-size:6.2px;line-height:6.2px;color:#d8d8d8;white-space:nowrap;transform-origin:0 0;transform:scaleX(1.0000) translateX(-100%);">+5</span><span style="position:absolute;left:1201.90px;top:459.03px;font-size:6.2px;line-height:6.2px;color:#d8d8d8;white-space:nowrap;transform-origin:0 0;transform:scaleX(1.0000) translateX(-100%);">0</span><span style="position:absolute;left:1201.90px;top:489.03px;font-size:6.2px;line-height:6.2px;color:#d8d8d8;white-space:nowrap;transform-origin:0 0;transform:scaleX(1.0000) translateX(-100%);">-5</span><span style="position:absolute;left:1201.90px;top:512.03px;font-size:6.2px;line-height:6.2px;color:#d8d8d8;white-space:nowrap;transform-origin:0 0;transform:scaleX(1.0000) translateX(-100%);">-10</span><span style="position:absolute;left:1201.90px;top:534.03px;font-size:6.2px;line-height:6.2px;color:#d8d8d8;white-space:nowrap;transform-origin:0 0;transform:scaleX(1.0000) translateX(-100%);">-20</span><span style="position:absolute;left:1201.90px;top:548.03px;font-size:6.2px;line-height:6.2px;color:#d8d8d8;white-space:nowrap;transform-origin:0 0;transform:scaleX(1.0000) translateX(-100%);">-30</span><span style="position:absolute;left:1201.90px;top:557.03px;font-size:6.2px;line-height:6.2px;color:#d8d8d8;white-space:nowrap;transform-origin:0 0;transform:scaleX(1.0000) translateX(-100%);">-∞</span><span style="position:absolute;left:1334.50px;top:324.03px;font-size:9.5px;line-height:9.5px;color:#e0e0e0;white-space:nowrap;transform-origin:0 0;transform:scaleX(1.0500) translateX(-50%);">Right Surround</span><span style="position:absolute;left:1309.20px;top:349.50px;font-size:12px;line-height:12px;color:#e0e0e0;white-space:nowrap;transform-origin:0 0;transform:scaleX(1.0000) translateX(-50%);">S</span><span style="position:absolute;left:1356.50px;top:349.50px;font-size:12px;line-height:12px;color:#e0e0e0;white-space:nowrap;transform-origin:0 0;transform:scaleX(1.0000) translateX(-50%);">M</span><span style="position:absolute;left:1334.50px;top:371.88px;font-size:12.5px;line-height:12.5px;color:#e0e0e0;white-space:nowrap;transform-origin:0 0;transform:scaleX(0.9255) translateX(-50%);">EQ/Comp</span><span style="position:absolute;left:1303.90px;top:406.03px;font-size:6.2px;line-height:6.2px;color:#d8d8d8;white-space:nowrap;transform-origin:0 0;transform:scaleX(1.0000) translateX(-100%);">+10</span><span style="position:absolute;left:1303.90px;top:429.03px;font-size:6.2px;line-height:6.2px;color:#d8d8d8;white-space:nowrap;transform-origin:0 0;transform:scaleX(1.0000) translateX(-100%);">+5</span><span style="position:absolute;left:1303.90px;top:459.03px;font-size:6.2px;line-height:6.2px;color:#d8d8d8;white-space:nowrap;transform-origin:0 0;transform:scaleX(1.0000) translateX(-100%);">0</span><span style="position:absolute;left:1303.90px;top:489.03px;font-size:6.2px;line-height:6.2px;color:#d8d8d8;white-space:nowrap;transform-origin:0 0;transform:scaleX(1.0000) translateX(-100%);">-5</span><span style="position:absolute;left:1303.90px;top:512.03px;font-size:6.2px;line-height:6.2px;color:#d8d8d8;white-space:nowrap;transform-origin:0 0;transform:scaleX(1.0000) translateX(-100%);">-10</span><span style="position:absolute;left:1303.90px;top:534.03px;font-size:6.2px;line-height:6.2px;color:#d8d8d8;white-space:nowrap;transform-origin:0 0;transform:scaleX(1.0000) translateX(-100%);">-20</span><span style="position:absolute;left:1303.90px;top:548.03px;font-size:6.2px;line-height:6.2px;color:#d8d8d8;white-space:nowrap;transform-origin:0 0;transform:scaleX(1.0000) translateX(-100%);">-30</span><span style="position:absolute;left:1303.90px;top:557.03px;font-size:6.2px;line-height:6.2px;color:#d8d8d8;white-space:nowrap;transform-origin:0 0;transform:scaleX(1.0000) translateX(-100%);">-∞</span><span style="position:absolute;left:1436.50px;top:324.03px;font-size:9.5px;line-height:9.5px;color:#e0e0e0;white-space:nowrap;transform-origin:0 0;transform:scaleX(1.0500) translateX(-50%);">Master</span><span style="position:absolute;left:1436.50px;top:348.98px;font-size:12.5px;line-height:12.5px;color:#e0e0e0;white-space:nowrap;transform-origin:0 0;transform:scaleX(0.9880) translateX(-50%);">Моно</span><span style="position:absolute;left:1436.50px;top:371.88px;font-size:12.5px;line-height:12.5px;color:#d8e8d8;white-space:nowrap;transform-origin:0 0;transform:scaleX(0.9255) translateX(-50%);">EQ/Comp</span><span style="position:absolute;left:1405.90px;top:406.03px;font-size:6.2px;line-height:6.2px;color:#d8d8d8;white-space:nowrap;transform-origin:0 0;transform:scaleX(1.0000) translateX(-100%);">+10</span><span style="position:absolute;left:1405.90px;top:429.03px;font-size:6.2px;line-height:6.2px;color:#d8d8d8;white-space:nowrap;transform-origin:0 0;transform:scaleX(1.0000) translateX(-100%);">+5</span><span style="position:absolute;left:1405.90px;top:459.03px;font-size:6.2px;line-height:6.2px;color:#d8d8d8;white-space:nowrap;transform-origin:0 0;transform:scaleX(1.0000) translateX(-100%);">0</span><span style="position:absolute;left:1405.90px;top:489.03px;font-size:6.2px;line-height:6.2px;color:#d8d8d8;white-space:nowrap;transform-origin:0 0;transform:scaleX(1.0000) translateX(-100%);">-5</span><span style="position:absolute;left:1405.90px;top:512.03px;font-size:6.2px;line-height:6.2px;color:#d8d8d8;white-space:nowrap;transform-origin:0 0;transform:scaleX(1.0000) translateX(-100%);">-10</span><span style="position:absolute;left:1405.90px;top:534.03px;font-size:6.2px;line-height:6.2px;color:#d8d8d8;white-space:nowrap;transform-origin:0 0;transform:scaleX(1.0000) translateX(-100%);">-20</span><span style="position:absolute;left:1405.90px;top:548.03px;font-size:6.2px;line-height:6.2px;color:#d8d8d8;white-space:nowrap;transform-origin:0 0;transform:scaleX(1.0000) translateX(-100%);">-30</span><span style="position:absolute;left:1405.90px;top:557.03px;font-size:6.2px;line-height:6.2px;color:#d8d8d8;white-space:nowrap;transform-origin:0 0;transform:scaleX(1.0000) translateX(-100%);">-∞</span><span style="position:absolute;left:756.60px;top:620.00px;font-size:14px;line-height:14px;color:#e0e0e0;white-space:nowrap;transform-origin:0 0;transform:scaleX(1.0066) translateX(-50%);">Коррекция перекрёстных помех</span><span style="position:absolute;left:756.60px;top:653.30px;font-size:12px;line-height:12px;color:#d04545;white-space:nowrap;transform-origin:0 0;transform:scaleX(1.0043) translateX(-50%);">Коррекция перекрёстных помех отключена</span><span style="position:absolute;left:38.00px;top:756.77px;font-size:12.5px;line-height:12.5px;color:#e0e0e0;white-space:nowrap;transform-origin:0 0;transform:scaleX(1.0129);">Расстояние до динамика</span><span style="position:absolute;left:333.30px;top:760.17px;font-size:12.5px;line-height:12.5px;color:#e0e0e0;white-space:nowrap;transform-origin:0 0;transform:scaleX(0.9284) translateX(-50%);">Дельта T</span><span style="position:absolute;left:590.00px;top:760.17px;font-size:12.5px;line-height:12.5px;color:#e0e0e0;white-space:nowrap;transform-origin:0 0;transform:scaleX(0.9129) translateX(-50%);">Затухание</span><span style="position:absolute;left:847.40px;top:760.17px;font-size:12.5px;line-height:12.5px;color:#e0e0e0;white-space:nowrap;transform-origin:0 0;transform:scaleX(0.9363) translateX(-50%);">Усиление цвета</span><span style="position:absolute;left:1104.90px;top:760.17px;font-size:12.5px;line-height:12.5px;color:#e0e0e0;white-space:nowrap;transform-origin:0 0;transform:scaleX(0.9691) translateX(-50%);">Низкий байпас</span><span style="position:absolute;left:1361.50px;top:760.17px;font-size:12.5px;line-height:12.5px;color:#e0e0e0;white-space:nowrap;transform-origin:0 0;transform:scaleX(0.9432) translateX(-50%);">Высокий байпас</span></div><div style="position:absolute;left:794px;top:402px;width:168px;height:25px;box-sizing:border-box;background:#fff;border:1px solid #767676"></div><div style="position:absolute;left:0;top:0;width:1504px;height:786px;will-change:transform"><span style="position:absolute;left:802.20px;top:409.18px;font-size:12.5px;line-height:12.5px;color:#3c3c3c;white-space:nowrap;transform-origin:0 0;transform:scaleX(0.9436);">Изменить динамику канала</span></div></body></html>
